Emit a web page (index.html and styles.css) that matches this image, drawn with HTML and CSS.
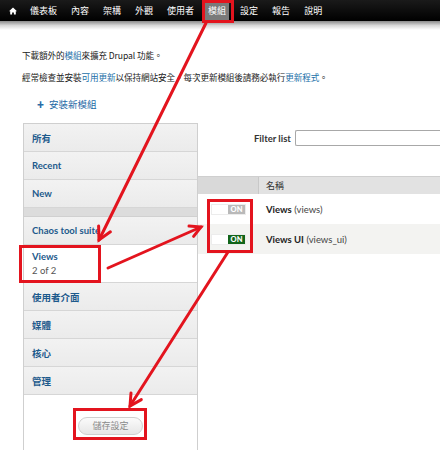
FILE: index.html
```html
<!DOCTYPE html>
<html lang="zh-Hant">
<head>
<meta charset="utf-8">
<title>模組</title>
<link rel="stylesheet" href="styles.css">
</head>
<body>
<div class="page">
  <nav class="toolbar">
    <span class="home">
      <svg width="8" height="8" viewBox="0 0 8 8"><path d="M4 0.5 L8 4.2 L6.8 4.2 L6.8 7.5 L4.9 7.5 L4.9 5.4 L3.1 5.4 L3.1 7.5 L1.2 7.5 L1.2 4.2 L0 4.2 Z" fill="#fff"/></svg>
    </span>
    <a class="nav-item">儀表板</a>
    <a class="nav-item">內容</a>
    <a class="nav-item">架構</a>
    <a class="nav-item">外觀</a>
    <a class="nav-item">使用者</a>
    <a class="nav-item active">模組</a>
    <a class="nav-item">設定</a>
    <a class="nav-item">報告</a>
    <a class="nav-item">說明</a>
  </nav>
  <div class="toolbar-shadow"></div>

  <div class="intro">
    <p class="line">下載額外的<a class="lnk">模組</a>來擴充 Drupal 功能。</p>
    <p class="line">經常檢查並安裝<a class="lnk">可用更新</a>以保持網站安全。每次更新模組後請務必執行<a class="lnk">更新程式</a>。</p>
    <p class="add"><span class="plus">✚</span><a class="lnk add-link">安裝新模組</a></p>
  </div>

  <div class="modules">
    <aside class="tabs">
      <div class="tab">所有</div>
      <div class="tab">Recent</div>
      <div class="tab">New</div>
      <div class="tab-gap"></div>
      <div class="tab">Chaos tool suite</div>
      <div class="tab selected">Views<span class="count">2 of 2</span></div>
      <div class="tab">使用者介面</div>
      <div class="tab">媒體</div>
      <div class="tab">核心</div>
      <div class="tab">管理</div>
      <div class="tab-footer"><button class="save">儲存設定</button></div>
    </aside>
    <section class="main">
      <div class="filter">
        <label class="filter-label">Filter list</label>
        <span class="filter-input"></span>
      </div>
      <div class="thead">
        <div class="th th-toggle"></div>
        <div class="th th-name">名稱</div>
      </div>
      <div class="row">
        <div class="cell-toggle"><span class="switch"><span class="knob off">ON</span></span></div>
        <div class="cell-name"><b>Views</b> (views)</div>
      </div>
      <div class="row alt">
        <div class="cell-toggle"><span class="switch"><span class="knob on">ON</span></span></div>
        <div class="cell-name"><b>Views UI</b> (views_ui)</div>
      </div>
    </section>
  </div>

  <div class="mark mark-nav"></div>
  <div class="mark mark-views"></div>
  <div class="mark mark-toggle"></div>
  <div class="mark mark-save"></div>
  <svg class="arrows" width="440" height="450" viewBox="0 0 440 450">
    <g stroke="#e3141e" stroke-width="3" stroke-linecap="round" fill="none">
      <line x1="206" y1="23" x2="99" y2="240"/>
      <polyline points="110.4,231.8 99,240 98.6,226"/>
      <line x1="108" y1="268" x2="201" y2="227"/>
      <polyline points="189,226 201,227 193.6,236.4"/>
      <line x1="228" y1="252" x2="130" y2="406"/>
      <polyline points="141.3,399.6 130,406 131,393"/>
    </g>
  </svg>
</div>
</body>
</html>
```

FILE: styles.css
```css
html, body {
  margin: 0;
  padding: 0;
  background: #fff;
  overflow: hidden;
}
.page {
  position: relative;
  width: 440px;
  height: 450px;
  overflow: hidden;
  font-family: "Lato", "Noto Sans CJK TC", sans-serif;
  color: #333;
}
.toolbar {
  height: 21px;
  background: linear-gradient(#1a1a1a, #000);
  display: flex;
  align-items: center;
  padding-left: 9px;
  font-family: "Noto Sans CJK TC", sans-serif;
}
.home {
  display: flex;
  width: 8px;
  height: 8px;
  margin-right: 6px;
}
.nav-item {
  color: #fff;
  font-size: 9px;
  line-height: 14px;
  padding: 1px 7px;
}
.nav-item.active {
  background: #7a7a7a;
  padding: 2px 3px;
  margin: 0 4px;
}
.toolbar-shadow {
  height: 9px;
  background: linear-gradient(#8a8a8a, #d8d8d8 50%, #fff);
}
.intro {
  padding: 18px 0 0 22px;
  font-family: "Noto Sans CJK TC", sans-serif;
}
.line {
  margin: 0 0 8px;
  font-size: 8.6px;
  line-height: 14px;
  color: #222;
  letter-spacing: -0.1px;
}
.lnk {
  color: #1a6fa8;
}
.add {
  margin: 13px 0 0 15px;
  display: flex;
  align-items: center;
  font-size: 9.5px;
  line-height: 14px;
}
.plus {
  color: #2b6ea8;
  font-size: 7px;
  margin-right: 5px;
}
.add-link {
  color: #1e6aa6;
}
.modules {
  display: flex;
  margin: 12px 0 0 23px;
}
.tabs {
  width: 173px;
  border: 1px solid #cfcfcf;
  border-bottom: none;
  display: flex;
  flex-direction: column;
  min-height: 340px;
  background: #fff;
}
.tab {
  height: 27px;
  border-bottom: 1px solid #d6d6d6;
  background: linear-gradient(#f2f2f2, #ebebeb);
  padding: 0 8px;
  display: flex;
  flex-direction: column;
  justify-content: center;
  font-size: 9.5px;
  font-weight: 700;
  color: #1d5a8c;
  font-family: "Lato", "Noto Sans CJK TC", sans-serif;
}
.tab-gap {
  height: 8px;
  background: #dcdcdc;
  border-bottom: 1px solid #d0d0d0;
}
.tab.selected {
  height: 37px;
  background: #fff;
}
.count {
  font-weight: 400;
  color: #555;
  margin-top: 3px;
}
.tab-footer {
  flex: 1;
  background: #fff;
  padding: 18px 0 0 54px;
}
.save {
  width: 65px;
  height: 18px;
  border: 1px solid #cfcfcf;
  border-radius: 9px;
  background: linear-gradient(#fbfbfb, #e6e6e6);
  color: #8a8a8a;
  font-size: 9px;
  font-family: "Noto Sans CJK TC", sans-serif;
  padding: 0;
}
.main {
  flex: 1;
  display: flex;
  flex-direction: column;
  padding-top: 7px;
}
.filter {
  display: flex;
  align-items: center;
  height: 16px;
  padding-left: 56px;
}
.filter-label {
  font-size: 9.5px;
  font-weight: 700;
  color: #333;
  margin-right: 4px;
}
.filter-input {
  flex: 1;
  height: 14px;
  border: 1px solid #a8a8a8;
  border-right: none;
  border-radius: 2px 0 0 2px;
  background: #fff;
}
.thead {
  display: flex;
  height: 17px;
  margin-top: 30px;
  border-top: 1px solid #cfcfcf;
}
.th {
  display: flex;
  align-items: center;
  font-size: 9px;
  color: #333;
  font-family: "Noto Sans CJK TC", sans-serif;
}
.th-toggle {
  width: 60px;
  background: #d9d9d9;
  border-right: 1px solid #c8c8c8;
}
.th-name {
  flex: 1;
  background: #e2e2e2;
  padding-left: 7px;
}
.row {
  display: flex;
  height: 30px;
  align-items: center;
  background: #fff;
}
.row.alt {
  background: #f3f3f1;
}
.cell-toggle {
  width: 60px;
  display: flex;
  justify-content: flex-end;
  padding-right: 12px;
  box-sizing: border-box;
}
.switch {
  display: flex;
  justify-content: flex-end;
  width: 35px;
  height: 11px;
  border: 1px solid #ececec;
  background: #fff;
  box-sizing: border-box;
}
.knob {
  width: 17px;
  height: 9px;
  font-size: 7.5px;
  line-height: 9px;
  font-weight: 900;
  text-align: center;
  color: #fff;
}
.knob.off {
  background: #b9b9b9;
}
.knob.on {
  background: #12651a;
}
.cell-name {
  padding-left: 8px;
  font-size: 9.5px;
  color: #444;
}
.cell-name b {
  color: #222;
}
.mark {
  position: absolute;
  border: 3px solid #e3141e;
  box-sizing: border-box;
}
.mark-nav {
  left: 202px;
  top: 0;
  width: 32px;
  height: 23px;
}
.mark-views {
  left: 19px;
  top: 245px;
  width: 82px;
  height: 38px;
}
.mark-toggle {
  left: 207px;
  top: 199px;
  width: 46px;
  height: 54px;
}
.mark-save {
  left: 73px;
  top: 408px;
  width: 74px;
  height: 32px;
}
.arrows {
  position: absolute;
  left: 0;
  top: 0;
}
```
